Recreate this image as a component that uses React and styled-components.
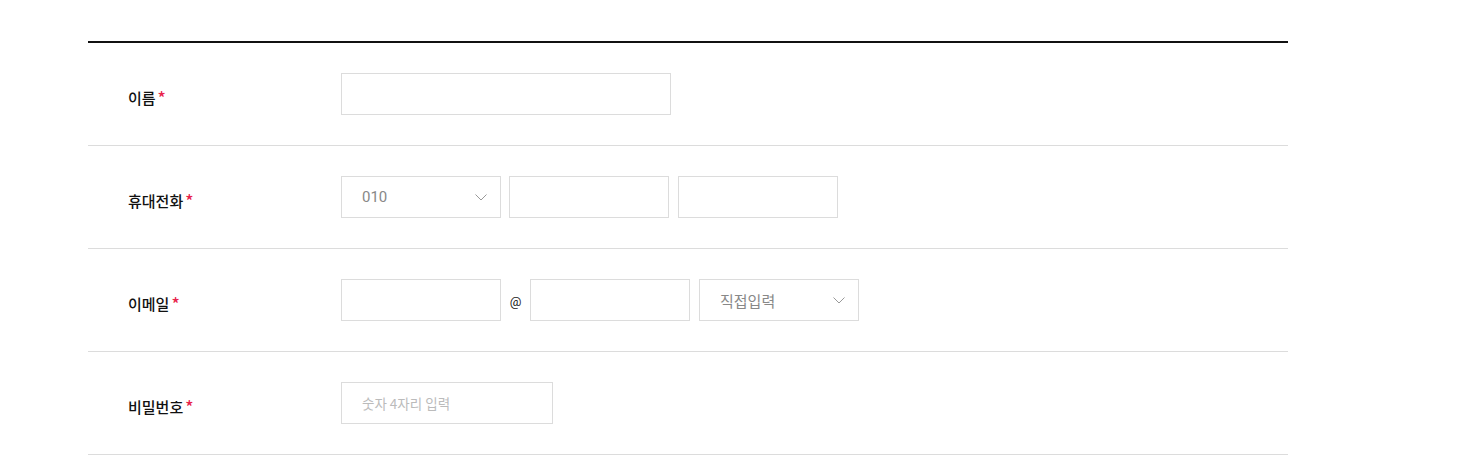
import styled, { createGlobalStyle } from "styled-components";

const GlobalStyle = createGlobalStyle`
  * { box-sizing: border-box; }
  body {
    margin: 0;
    background: #fff;
    font-family: "Noto Sans CJK KR", "Noto Sans", sans-serif;
    color: #111;
  }
`;

const StyledPage = styled.main`
  padding: 41px 0 0 88px;
`;

const StyledForm = styled.div`
  width: 1200px;
  border-top: 2px solid #111;
`;

const StyledRow = styled.div`
  display: flex;
  align-items: center;
  height: 103px;
  border-bottom: 1px solid #dcdcdc;
`;

const StyledLabel = styled.div`
  display: flex;
  align-items: center;
  width: 253px;
  padding: 6px 0 0 40px;
  font-size: 15px;
  font-weight: 500;
  color: #111;
`;

const StyledRequired = styled.span`
  color: #e8224b;
  margin-left: 2px;
  font-size: 17px;
  line-height: 1;
`;

const StyledFields = styled.div`
  display: flex;
  align-items: center;
  gap: 9px;
`;

const StyledInput = styled.input`
  width: ${(props) => props.width || 160}px;
  height: 42px;
  border: 1px solid #dcdcdc;
  padding: 0 20px;
  font-family: "Noto Sans CJK KR", "Noto Sans", sans-serif;
  font-size: 13.5px;
  color: #111;
  outline: none;
  margin: 0;

  &::placeholder {
    color: #bbb;
  }
`;

const StyledSelect = styled.div`
  position: relative;
  display: flex;
  align-items: center;
  width: 160px;
  height: 42px;
  border: 1px solid #dcdcdc;
  padding: 0 20px;
  font-family: ${(props) =>
    props.numeric ? `Roboto, "Noto Sans", sans-serif` : `"Noto Sans CJK KR", "Noto Sans", sans-serif`};
  font-size: 15px;
  color: #888;

  svg {
    position: absolute;
    right: 13px;
    top: 17px;
  }
`;

const StyledAt = styled.span`
  width: 29px;
  margin: 0 -9px;
  text-align: center;
  font-family: Roboto, "Noto Sans", sans-serif;
  font-size: 13px;
  color: #222;
  padding-top: 2px;
`;

function Chevron() {
  return (
    <svg width="12" height="7" viewBox="0 0 12 7" fill="none">
      <path d="M0.5 0.5L6 6L11.5 0.5" stroke="#999" strokeWidth="1" />
    </svg>
  );
}

function Label({ children }) {
  return (
    <StyledLabel>
      {children}
      <StyledRequired>*</StyledRequired>
    </StyledLabel>
  );
}

export default function App() {
  return (
    <StyledPage>
      <GlobalStyle />
      <StyledForm>
        <StyledRow>
          <Label>이름</Label>
          <StyledFields>
            <StyledInput width={330} />
          </StyledFields>
        </StyledRow>

        <StyledRow>
          <Label>휴대전화</Label>
          <StyledFields>
            <StyledSelect numeric>
              010
              <Chevron />
            </StyledSelect>
            <StyledInput style={{ marginLeft: -1 }} />
            <StyledInput />
          </StyledFields>
        </StyledRow>

        <StyledRow>
          <Label>이메일</Label>
          <StyledFields>
            <StyledInput />
            <StyledAt>@</StyledAt>
            <StyledInput />
            <StyledSelect>
              직접입력
              <Chevron />
            </StyledSelect>
          </StyledFields>
        </StyledRow>

        <StyledRow>
          <Label>비밀번호</Label>
          <StyledFields>
            <StyledInput width={212} placeholder="숫자 4자리 입력" />
          </StyledFields>
        </StyledRow>
      </StyledForm>
    </StyledPage>
  );
}
